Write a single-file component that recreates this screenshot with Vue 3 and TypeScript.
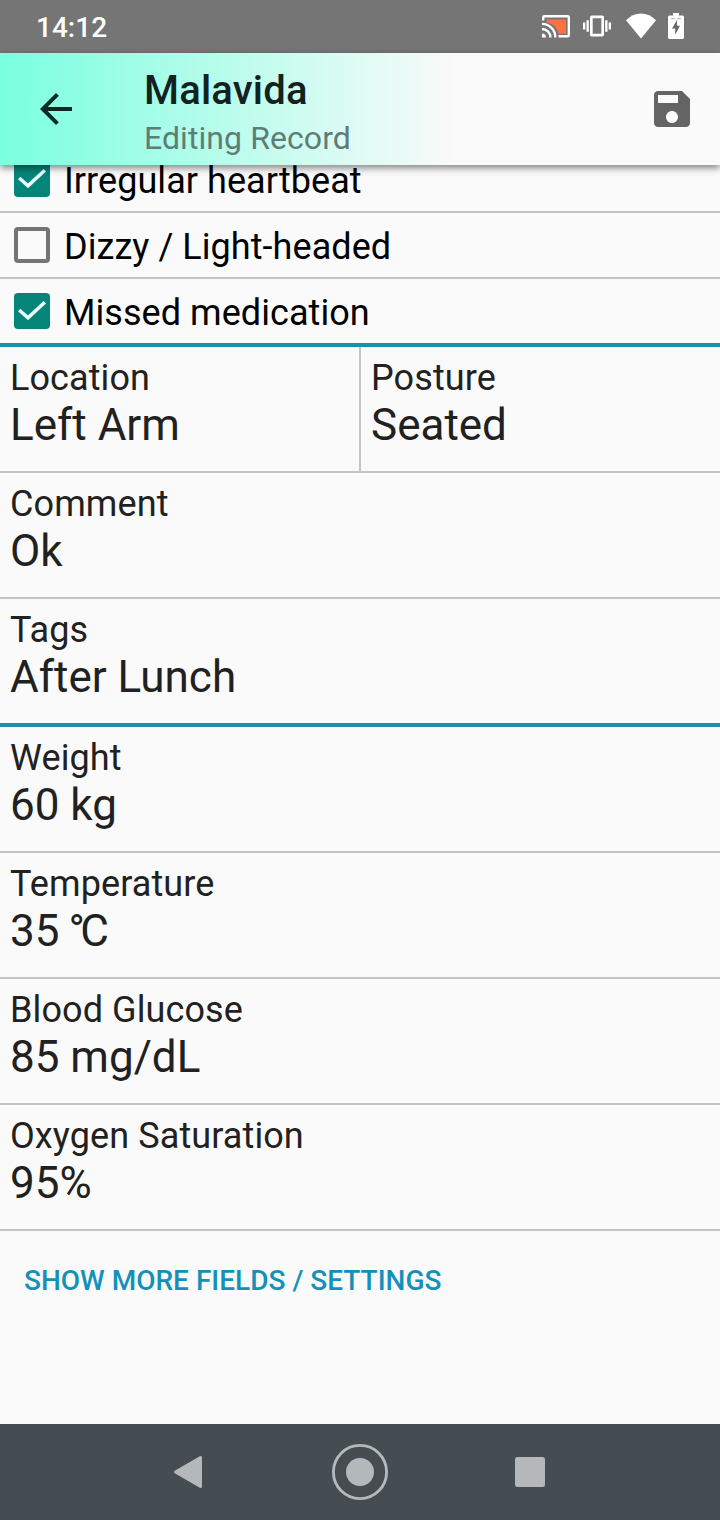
<script setup lang="ts">
interface Symptom {
  label: string
  checked: boolean
}
interface Field {
  label: string
  value: string
  degree?: string
}
interface Row {
  fields: Field[]
  sectionEnd?: boolean
}

const symptoms: Symptom[] = [
  { label: 'Irregular heartbeat', checked: true },
  { label: 'Dizzy / Light-headed', checked: false },
  { label: 'Missed medication', checked: true },
]

const rows: Row[] = [
  { fields: [{ label: 'Location', value: 'Left Arm' }, { label: 'Posture', value: 'Seated' }] },
  { fields: [{ label: 'Comment', value: 'Ok' }] },
  { fields: [{ label: 'Tags', value: 'After Lunch' }], sectionEnd: true },
  { fields: [{ label: 'Weight', value: '60 kg' }] },
  { fields: [{ label: 'Temperature', value: '35 ', degree: 'C' }] },
  { fields: [{ label: 'Blood Glucose', value: '85 mg/dL' }] },
  { fields: [{ label: 'Oxygen Saturation', value: '95%' }] },
]
</script>

<template>
  <div class="screen">
    <div class="status">
      <span class="clock">14:12</span>
      <svg class="cast" width="28" height="23" viewBox="0 0 28 23">
        <path d="M5 4.5H24V18.8H16.5A14 14 0 0 0 5 7.5Z" fill="#ff7043" />
        <g fill="none" stroke="#fff" stroke-width="2.4">
          <path d="M1.2 5.5V2.2Q1.2 1.2 2.2 1.2H25.8Q26.8 1.2 26.8 2.2V20.3Q26.8 21.3 25.8 21.3H16.5" />
          <path d="M0 8.9A13.3 13.3 0 0 1 13.3 22.4" />
          <path d="M0 14A8.4 8.4 0 0 1 8.4 22.4" />
        </g>
        <path d="M0 18.6A3.9 3.9 0 0 1 3.9 22.5H0Z" fill="#fff" />
      </svg>
      <svg class="vibrate" width="28" height="28" viewBox="0 0 24 24" fill="#fff">
        <path d="M0 15h2V9H0v6zm3 2h2V7H3v10zm19-8v6h2V9h-2zm-3 8h2V7h-2v10zM16.5 3h-9C6.67 3 6 3.67 6 4.5v15c0 .83.67 1.5 1.5 1.5h9c.83 0 1.5-.67 1.5-1.5v-15c0-.83-.67-1.5-1.5-1.5zM15.7 18.7H8.3V5.3h7.4v13.4z" />
      </svg>
      <svg class="wifi" width="30" height="26" viewBox="0 0 30 26">
        <path d="M0 7.2Q6.5.4 15 .4T30 7.2L15 25.5Z" fill="#fff" />
      </svg>
      <svg class="battery" width="16" height="26" viewBox="0 0 16 26">
        <path d="M5 0H11V2.5H14.5Q16 2.5 16 4V24.5Q16 26 14.5 26H1.5Q0 26 0 24.5V4Q0 2.5 1.5 2.5H5Z" fill="#fff" />
        <path d="M3 5.7H7M9 5.7H13" stroke="#aaa" stroke-width="1" />
        <path d="M9 7L4 15.5H7.2V21.5L12 12.8H9Z" fill="#666" />
      </svg>
    </div>

    <header class="appbar">
      <svg class="back" width="48" height="48" viewBox="0 0 24 24">
        <path d="M20 11H7.83l5.59-5.59L12 4l-8 8 8 8 1.41-1.41L7.83 13H20v-2z" fill="#0b2a25" />
      </svg>
      <div class="titles">
        <div class="title">Malavida</div>
        <div class="subtitle">Editing Record</div>
      </div>
      <svg width="48" height="48" viewBox="0 0 24 24">
        <path d="M17 3H5c-1.11 0-2 .9-2 2v14c0 1.1.89 2 2 2h14c1.1 0 2-.9 2-2V7l-4-4zm-5 16c-1.66 0-3-1.34-3-3s1.34-3 3-3 3 1.34 3 3-1.34 3-3 3zm3-10H5V5h10v4z" fill="#646464" />
      </svg>
    </header>

    <main class="content">
      <div class="symptoms">
        <div v-for="s in symptoms" :key="s.label" class="symptom">
          <span class="box" :class="{ on: s.checked }">
            <svg v-if="s.checked" width="36" height="36" viewBox="0 0 36 36">
              <path d="M5.2 17L14 24.8L30.8 9.3" fill="none" stroke="#e8fffb" stroke-width="3.5" />
            </svg>
          </span>
          <span class="symptom-label">{{ s.label }}</span>
        </div>
      </div>
      <div v-for="(row, i) in rows" :key="i" class="row" :class="{ 'section-end': row.sectionEnd }">
        <div v-for="f in row.fields" :key="f.label" class="field">
          <div class="label">{{ f.label }}</div>
          <div class="value">{{ f.value }}<template v-if="f.degree"><span class="degree">°</span>{{ f.degree }}</template></div>
        </div>
      </div>
      <div class="more">SHOW MORE FIELDS / SETTINGS</div>
    </main>

    <nav class="nav">
      <svg width="170" height="96" viewBox="0 0 170 96">
        <path d="M70.5 48L95.5 33.5V62.5Z" fill="#b4b8ba" stroke="#b4b8ba" stroke-width="3" stroke-linejoin="round" />
      </svg>
      <svg width="170" height="96" viewBox="0 0 170 96">
        <circle cx="85" cy="48" r="26.6" fill="none" stroke="#b4b8ba" stroke-width="2.9" />
        <circle cx="85" cy="48" r="14" fill="#b4b8ba" />
      </svg>
      <svg width="170" height="96" viewBox="0 0 170 96">
        <rect x="70" y="33" width="30" height="30" rx="2.5" fill="#b4b8ba" />
      </svg>
    </nav>
  </div>
</template>

<style>
body {
  margin: 0;
}
</style>

<style scoped>
.screen {
  width: 720px;
  height: 1520px;
  display: flex;
  flex-direction: column;
  overflow: hidden;
  background: #fafafa;
  color: #212121;
  font-family: Roboto, "Noto Sans", sans-serif;
}
.screen svg {
  display: block;
  flex: none;
}
.status {
  height: 53px;
  box-sizing: border-box;
  flex: none;
  display: flex;
  align-items: center;
  padding: 0 36px;
  background: #757575;
  color: #fff;
}
.clock {
  flex: 1;
  padding-top: 2px;
  font-size: 28px;
  line-height: 34px;
  font-weight: 500;
}
.cast,
.vibrate {
  margin-bottom: 1px;
}
.vibrate {
  margin-left: 13px;
}
.wifi {
  margin-left: 15px;
  margin-bottom: 2px;
}
.battery {
  margin-left: 12px;
  margin-bottom: 2px;
}
.appbar {
  height: 112px;
  box-sizing: border-box;
  flex: none;
  display: flex;
  align-items: center;
  padding: 0 24px 0 32px;
  position: relative;
  z-index: 1;
  background: linear-gradient(90deg, #7affdf 0, #fafafa 456px);
  box-shadow: 0 3px 7px rgba(0, 0, 0, 0.48);
}
.titles {
  flex: 1;
  margin-left: 64px;
  padding-top: 6px;
  white-space: nowrap;
}
.title {
  font-size: 40px;
  line-height: 47px;
  letter-spacing: 0.2px;
  font-weight: 500;
  color: #12221f;
}
.subtitle {
  font-size: 32px;
  line-height: 38px;
  letter-spacing: 0.08px;
  margin-top: 5px;
  color: #5f7d76;
}
.content {
  flex: 1;
  min-height: 0;
}
.symptoms {
  margin-top: -18px;
  border-bottom: 4px solid #1f8fae;
}
.symptom {
  height: 64px;
  display: flex;
  align-items: center;
  padding-left: 14px;
  color: #000;
}
.symptom + .symptom {
  border-top: 2px solid #c4c4c4;
}
.box {
  width: 36px;
  height: 36px;
  box-sizing: border-box;
  border: 4px solid #757575;
  border-radius: 4px;
}
.box.on {
  border: 0;
  background: #05857a;
}
.symptom-label {
  margin-left: 14px;
  font-size: 36px;
  line-height: 42px;
  letter-spacing: 0.06px;
  padding-top: 3px;
}
.row {
  display: flex;
  height: 124px;
  border-bottom: 2px solid #c4c4c4;
}
.row.section-end {
  border-bottom: 4px solid #1f8fae;
}
.field {
  flex: 1;
  padding: 10px 0 0 10px;
}
.field + .field {
  border-left: 2px solid #c4c4c4;
}
.label {
  font-size: 36px;
  line-height: 42px;
  letter-spacing: 0.1px;
}
.value {
  font-size: 44px;
  line-height: 52px;
}
.degree {
  margin-left: -2px;
  letter-spacing: -4.5px;
}
.more {
  padding: 33px 24px 0;
  font-size: 28px;
  line-height: 34px;
  font-weight: 500;
  color: #1591b9;
}
.nav {
  height: 96px;
  flex: none;
  display: flex;
  justify-content: center;
  background: #454d52;
}
</style>
